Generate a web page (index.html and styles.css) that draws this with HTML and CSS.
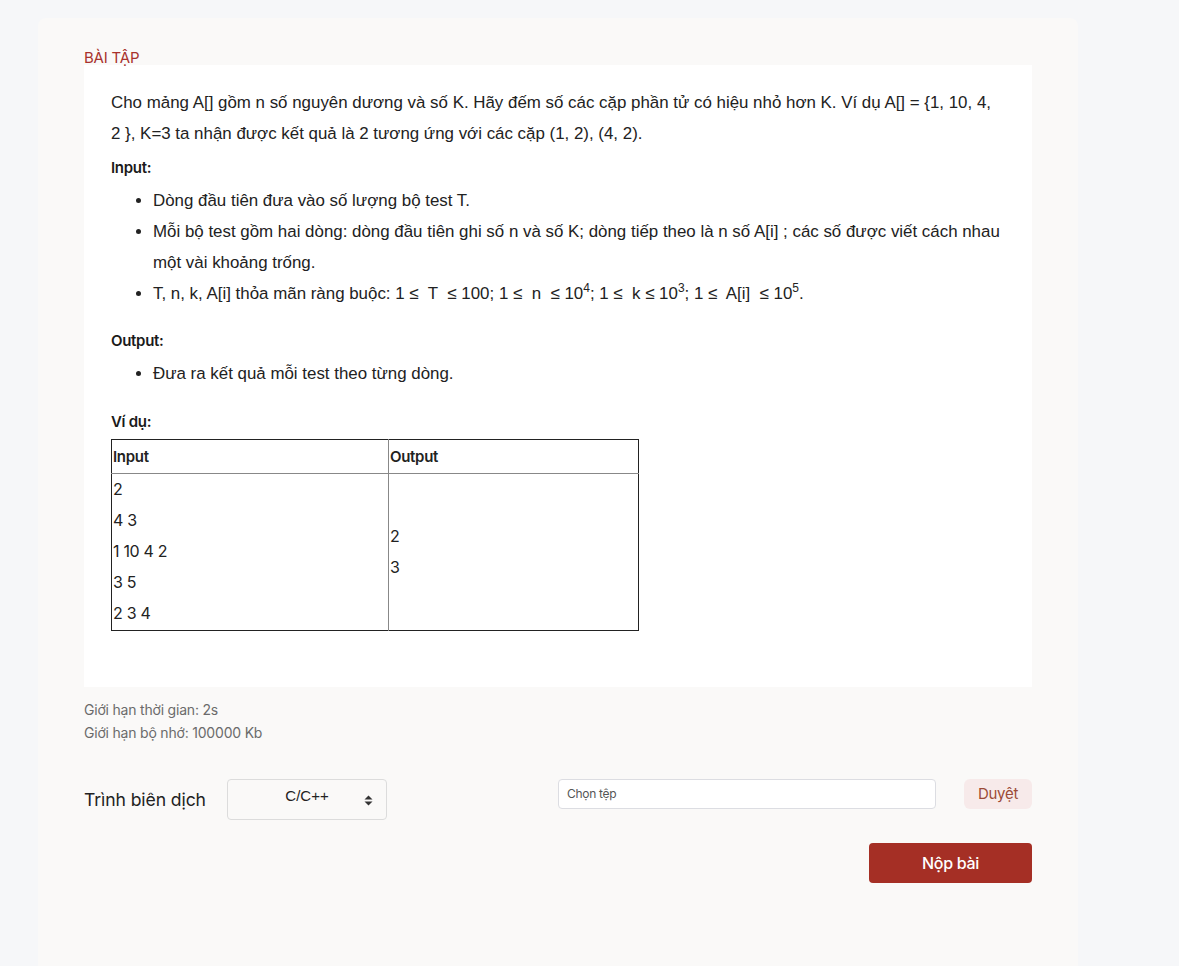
FILE: index.html
```html
<!DOCTYPE html>
<html lang="vi">
<head>
<meta charset="utf-8">
<title>Bài tập</title>
<link rel="stylesheet" href="styles.css">
</head>
<body>
<div class="card">
  <div class="title">BÀI TẬP</div>
  <div class="problem">
    <p class="text">Cho mảng A[] gồm n số nguyên dương và số K. Hãy đếm số các cặp phần tử có hiệu nhỏ hơn K. Ví dụ A[] = {1, 10, 4, 2 }, K=3 ta nhận được kết quả là 2 tương ứng với các cặp (1, 2), (4, 2).</p>
    <div class="label">Input:</div>
    <ul class="list">
      <li>Dòng đầu tiên đưa vào số lượng bộ test T.</li>
      <li>Mỗi bộ test gồm hai dòng: dòng đầu tiên ghi số n và số K; dòng tiếp theo là n số A[i] ; các số được viết cách nhau một vài khoảng trống.</li>
      <li>T, n, k, A[i] thỏa mãn ràng buộc: 1 ≤&nbsp; T&nbsp; ≤ 100; 1 ≤&nbsp; n&nbsp; ≤ 10<sup>4</sup>; 1 ≤&nbsp; k ≤ 10<sup>3</sup>; 1 ≤&nbsp; A[i]&nbsp; ≤ 10<sup>5</sup>.</li>
    </ul>
    <div class="label label-gap">Output:</div>
    <ul class="list">
      <li>Đưa ra kết quả mỗi test theo từng dòng.</li>
    </ul>
    <div class="label label-gap2">Ví dụ:</div>
    <table class="example">
      <thead>
        <tr><th class="col-in">Input</th><th class="col-out">Output</th></tr>
      </thead>
      <tbody>
        <tr>
          <td class="col-in">
            <div class="line">2</div>
            <div class="line">4 3</div>
            <div class="line">1 10 4 2</div>
            <div class="line">3 5</div>
            <div class="line">2 3 4</div>
          </td>
          <td class="col-out">
            <div class="line">2</div>
            <div class="line">3</div>
          </td>
        </tr>
      </tbody>
    </table>
  </div>
  <div class="limits">
    <div>Giới hạn thời gian: 2s</div>
    <div>Giới hạn bộ nhớ: 100000 Kb</div>
  </div>
  <div class="submit-row">
    <div class="compiler-label">Trình biên dịch</div>
    <div class="select">
      <span class="select-text">C/C++</span>
      <svg class="select-arrows" width="9" height="11" viewBox="0 0 9 11"><path d="M4.5 0.5 L8.5 4.5 L0.5 4.5 Z M0.5 6.5 L8.5 6.5 L4.5 10.5 Z" fill="#333"/></svg>
    </div>
    <div class="file-group">
      <div class="file-input">Chọn tệp</div>
      <div class="browse">Duyệt</div>
    </div>
  </div>
  <div class="submit-wrap">
    <div class="submit">Nộp bài</div>
  </div>
</div>
</body>
</html>
```

FILE: styles.css
```css
html, body {
  margin: 0;
  padding: 0;
}
body {
  background: #f6f7f9;
  font-family: "Liberation Sans", Arial, sans-serif;
  color: #222;
}
.card {
  margin: 18px 0 0 38px;
  width: 1040px;
  box-sizing: border-box;
  min-height: 960px;
  background: #faf9f8;
  border-radius: 8px 8px 0 0;
  padding: 32px 46px 0 46px;
}
.title {
  font-family: Inter, "Noto Sans", sans-serif;
  font-size: 15px;
  line-height: 15px;
  color: #a8322d;
  letter-spacing: -0.2px;
}
.problem {
  background: #fff;
  padding: 22px 27px 56px 27px;
}
.text {
  margin: 0 0 3px 0;
  font-size: 16.9px;
  line-height: 31px;
}
.label {
  font-family: Inter, "Noto Sans", sans-serif;
  font-weight: 600;
  font-size: 15px;
  line-height: 31px;
  letter-spacing: -0.3px;
  color: #1a1a1a;
}
.label-gap {
  margin-top: 16px;
}
.label-gap2 {
  margin-top: 17px;
}
.list {
  margin: 2px 0 0 0;
  padding-left: 42px;
  font-size: 16.9px;
  line-height: 31px;
}
.list sup {
  font-size: 12px;
  line-height: 0;
  vertical-align: 7px;
}
.example {
  margin-top: 2px;
  border-collapse: collapse;
  border: 1px solid #222;
  font-family: Inter, "Noto Sans", sans-serif;
  font-size: 16px;
  color: #222;
}
.example th {
  text-align: left;
  font-size: 15px;
  font-weight: 600;
  letter-spacing: -0.3px;
  height: 33px;
  padding: 0 1px;
  border-bottom: 1px solid #888;
}
.example td {
  padding: 0 1px 1px 1px;
  vertical-align: middle;
}
.col-in {
  width: 274px;
  border-right: 1px solid #888;
}
.col-out {
  width: 247px;
}
.line {
  line-height: 31px;
  letter-spacing: -0.3px;
}
.limits {
  margin-top: 11px;
  font-family: Inter, "Noto Sans", sans-serif;
  font-size: 14px;
  line-height: 23px;
  color: #6b6b6b;
  letter-spacing: -0.2px;
}
.submit-row {
  display: flex;
  align-items: flex-start;
  margin-top: 35px;
}
.compiler-label {
  font-family: Inter, "Noto Sans", sans-serif;
  font-size: 17.6px;
  line-height: 41px;
  width: 143px;
  color: #222;
  letter-spacing: -0.1px;
}
.select {
  width: 160px;
  height: 41px;
  box-sizing: border-box;
  border: 1px solid #dcdcdc;
  border-radius: 4px;
  display: flex;
  align-items: flex-start;
}
.select-text {
  flex: 1;
  text-align: center;
  font-size: 15px;
  line-height: 16px;
  padding-top: 8px;
  padding-left: 22px;
  color: #222;
}
.select-arrows {
  margin: 15px 13px 0 0;
}
.file-group {
  margin-left: auto;
  display: flex;
  gap: 28px;
}
.file-input {
  width: 378px;
  height: 30px;
  box-sizing: border-box;
  background: #fff;
  border: 1px solid #dcdde2;
  border-radius: 4px;
  padding-left: 8px;
  font-family: Inter, "Noto Sans", sans-serif;
  font-size: 12px;
  line-height: 28px;
  color: #555;
  letter-spacing: -0.3px;
}
.browse {
  width: 68px;
  height: 30px;
  background: #f7eaea;
  border-radius: 6px;
  text-align: center;
  font-family: Inter, "Noto Sans", sans-serif;
  font-size: 15px;
  line-height: 30px;
  color: #9c4a37;
  letter-spacing: -0.3px;
}
.submit-wrap {
  display: flex;
  justify-content: flex-end;
  margin-top: 23px;
}
.submit {
  width: 163px;
  height: 40px;
  background: #a52f25;
  border-radius: 4px;
  color: #fff;
  text-align: center;
  font-family: Inter, "Noto Sans", sans-serif;
  font-size: 16px;
  font-weight: 500;
  line-height: 40px;
  letter-spacing: -0.3px;
}
```
